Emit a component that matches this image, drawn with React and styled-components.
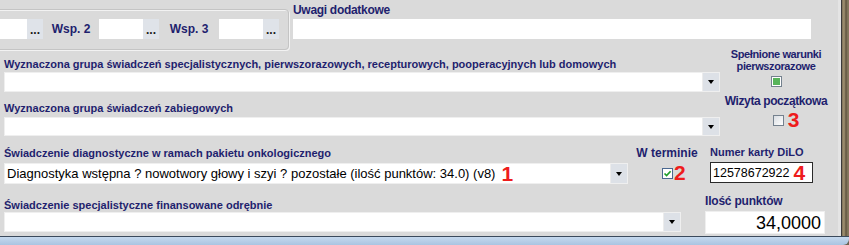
import React from "react";
import styled, { createGlobalStyle } from "styled-components";

const Global = createGlobalStyle`
  html, body {
    margin: 0;
    padding: 0;
    background: #dadada;
  }
  body {
    font-family: "Liberation Sans", Arial, sans-serif;
  }
`;

function Select({ width, height, value, mark }) {
  return (
    <SelectBox width={width} height={height}>
      <SelectText>
        {value}
        {mark && <RedMark>{mark}</RedMark>}
      </SelectText>
      <DropButton>
        <Arrow />
      </DropButton>
    </SelectBox>
  );
}

function Checkbox({ kind }) {
  return (
    <Check kind={kind}>
      {kind === "filled" && <GreenSquare />}
      {kind === "checked" && (
        <svg width="9" height="9" viewBox="0 0 9 9">
          <path d="M1.5 4.5 L3.6 6.6 L7.6 2.2" stroke="#1e9e2a" strokeWidth="1.7" fill="none" />
        </svg>
      )}
    </Check>
  );
}

export default function App() {
  return (
    <>
      <Global />
      <Window>
        <Body>
          <Content>
            <TopSection>
              <GroupBox>
                <TextBox width={58} />
                <DotsButton>...</DotsButton>
                <WspLabel w={56}>Wsp. 2</WspLabel>
                <TextBox width={44} />
                <DotsButton>...</DotsButton>
                <WspLabel w={60}>Wsp. 3</WspLabel>
                <TextBox width={44} />
                <DotsButton>...</DotsButton>
              </GroupBox>
              <Uwagi>
                <UwagiLabel>Uwagi dodatkowe</UwagiLabel>
                <TextBox width={518} />
              </Uwagi>
            </TopSection>

            <Row h={45}>
              <Field width={716} top={8}>
                <Label>
                  Wyznaczona grupa świadczeń specjalistycznych, pierwszorazowych, recepturowych,
                  pooperacyjnych lub domowych
                </Label>
                <Select height={20} />
              </Field>
              <Side>
                <SideLabel top={-2}>
                  Spełnione warunki
                  <br />
                  pierwszorazowe
                </SideLabel>
                <CheckRow top={2}>
                  <Checkbox kind="filled" />
                </CheckRow>
              </Side>
            </Row>

            <Row h={45}>
              <Field width={716} top={7} gap={2}>
                <Label>Wyznaczona grupa świadczeń zabiegowych</Label>
                <Select height={19} />
              </Field>
              <Side>
                <SideLabel top={-1} big>
                  Wizyta początkowa
                </SideLabel>
                <CheckRow top={5} shift={20}>
                  <Checkbox kind="empty" />
                  <RedMark>3</RedMark>
                </CheckRow>
              </Side>
            </Row>

            <Row h={50}>
              <Field width={624} top={7} gap={3}>
                <Label>Świadczenie diagnostyczne w ramach pakietu onkologicznego</Label>
                <Select
                  height={21}
                  value="Diagnostyka wstępna ? nowotwory głowy i szyi ? pozostałe (ilość punktów: 34.0) (v8)"
                  mark="1"
                />
              </Field>
              <TermCol>
                <SideLabel big spaced>W terminie</SideLabel>
                <CheckRow top={6} left={25} tight>
                  <Checkbox kind="checked" />
                  <RedMark>2</RedMark>
                </CheckRow>
              </TermCol>
              <DiloCol>
                <Label>Numer karty DiLO</Label>
                <DiloInput>
                  12578672922
                  <RedMark>4</RedMark>
                </DiloInput>
              </DiloCol>
            </Row>

            <Row h={46}>
              <Field width={677} top={9} gap={0}>
                <Label>Świadczenie specjalistyczne finansowane odrębnie</Label>
                <Select height={20} />
              </Field>
              <PointsCol>
                <PointsLabel>Ilość punktów</PointsLabel>
                <PointsInput>34,0000</PointsInput>
              </PointsCol>
            </Row>
          </Content>
          <RightFrame />
        </Body>
        <BottomFrame />
      </Window>
    </>
  );
}

const Window = styled.div`
  width: 849px;
  height: 245px;
  overflow: hidden;
  display: flex;
  flex-direction: column;
  background: #6e6452;
`;

const Body = styled.div`
  display: flex;
  height: 236px;
`;

const Content = styled.div`
  width: 838px;
  background: #dadada;
  border-right: 3px solid #e4e4e4;
  overflow: hidden;
  display: flex;
  flex-direction: column;
`;

const RightFrame = styled.div`
  flex: 1;
  border-left: 1px solid #3a3a3a;
  background: repeating-linear-gradient(
      90deg,
      #7d7058 0px,
      #a39474 2px,
      #5f543f 4px,
      #8c7f64 6px
    ),
    #7d7058;
`;

const BottomFrame = styled.div`
  height: 8px;
  border-top: 1px solid #3b4a5c;
  background: linear-gradient(#c6d9ee, #a9c4e2);
  border-bottom-right-radius: 6px;
`;

const TopSection = styled.div`
  display: flex;
  align-items: flex-start;
  height: 50px;
  flex-shrink: 0;
`;

const GroupBox = styled.div`
  margin-left: -40px;
  margin-top: 9px;
  height: 30px;
  padding: 9px 9px 0 8px;
  border: 1px solid #c4c4c4;
  border-radius: 4px;
  box-shadow: 1px 1px 0 #f2f2f2, inset 1px 1px 0 #f2f2f2;
  display: flex;
  align-items: flex-start;
`;

const TextBox = styled.div`
  width: ${(p) => p.width}px;
  height: 20px;
  background: #fff;
  box-sizing: border-box;
  flex-shrink: 0;
`;

const DotsButton = styled.div`
  width: 16px;
  height: 20px;
  background: #dfe3e9;
  color: #1a1a1a;
  font: bold 12px "Liberation Sans", Arial, sans-serif;
  line-height: 22px;
  text-align: center;
  flex-shrink: 0;
`;

const WspLabel = styled.div`
  width: ${(p) => p.w}px;
  text-align: center;
  color: #1f1f6e;
  font: bold 12px "Liberation Sans", Arial, sans-serif;
  line-height: 20px;
  flex-shrink: 0;
`;

const Uwagi = styled.div`
  margin-left: 4px;
  display: flex;
  flex-direction: column;
`;

const UwagiLabel = styled.div`
  color: #1f1f6e;
  font: bold 12px "Liberation Sans", Arial, sans-serif;
  letter-spacing: -0.3px;
  line-height: 15px;
  padding-top: 3px;
  margin-bottom: 1px;
`;

const Row = styled.div`
  display: flex;
  align-items: flex-start;
  height: ${(p) => p.h}px;
  flex-shrink: 0;
`;

const Field = styled.div`
  width: ${(p) => p.width}px;
  margin-left: 4px;
  padding-top: ${(p) => p.top}px;
  display: flex;
  flex-direction: column;
  gap: ${(p) => (p.gap === undefined ? 1 : p.gap)}px;
  flex-shrink: 0;
`;

const Label = styled.div`
  color: #1f1f6e;
  font: bold 11px "Liberation Sans", Arial, sans-serif;
  letter-spacing: 0;
  line-height: 13px;
  white-space: nowrap;
`;

const SelectBox = styled.div`
  height: ${(p) => p.height}px;
  box-sizing: border-box;
  border: 1px solid #efefef;
  background: #fff;
  display: flex;
`;

const SelectText = styled.div`
  flex: 1;
  display: flex;
  align-items: center;
  padding-left: 2px;
  border-right: 1px solid #ececec;
  color: #000;
  font: 13px "Liberation Sans", Arial, sans-serif;
  white-space: nowrap;
`;

const DropButton = styled.div`
  width: 16px;
  background: #dde1e7;
  display: flex;
  align-items: center;
  justify-content: center;
`;

const Arrow = styled.div`
  width: 0;
  height: 0;
  border-left: 3.5px solid transparent;
  border-right: 3.5px solid transparent;
  border-top: 4px solid #000;
`;

const RedMark = styled.span`
  color: #ee1c1c;
  font: bold 21px "Liberation Sans", Arial, sans-serif;
  line-height: 18px;
  margin-left: 6px;
`;

const Side = styled.div`
  width: 112px;
  display: flex;
  flex-direction: column;
  align-items: center;
  flex-shrink: 0;
`;

const SideLabel = styled.div`
  margin-top: ${(p) => p.top || 0}px;
  color: #1f1f6e;
  font: bold ${(p) => (p.big ? 12 : 11)}px "Liberation Sans", Arial, sans-serif;
  letter-spacing: ${(p) => (p.spaced ? 0 : -0.4)}px;
  line-height: ${(p) => (p.big ? 14 : 12)}px;
  text-align: center;
  white-space: nowrap;
`;

const CheckRow = styled.div`
  margin-top: ${(p) => p.top}px;
  margin-left: ${(p) => p.shift || 0}px;
  padding-left: ${(p) => p.left || 0}px;
  align-self: ${(p) => (p.left ? "stretch" : "center")};
  display: flex;
  align-items: center;
  height: 14px;

  ${RedMark} {
    margin-left: ${(p) => (p.tight ? 1 : 4)}px;
  }
`;

const Check = styled.div`
  width: 11px;
  height: 11px;
  box-sizing: border-box;
  border: 1px solid ${(p) => (p.kind === "checked" ? "#4a6890" : "#74818e")};
  background: ${(p) =>
    p.kind === "empty" ? "linear-gradient(135deg, #d9dde2, #ffffff)" : "#fff"};
  display: flex;
  align-items: center;
  justify-content: center;
`;

const GreenSquare = styled.div`
  width: 7px;
  height: 7px;
  background: #58b45a;
`;

const TermCol = styled.div`
  width: 60px;
  margin-left: 9px;
  padding-top: 6px;
  display: flex;
  flex-direction: column;
  align-items: center;
  flex-shrink: 0;
`;

const DiloCol = styled.div`
  width: 103px;
  margin-left: 13px;
  padding-top: 6px;
  display: flex;
  flex-direction: column;
  gap: 3px;
  flex-shrink: 0;
`;

const DiloInput = styled.div`
  height: 21px;
  box-sizing: border-box;
  border: 1px solid #2a2a2a;
  background: #fff;
  padding-left: 2px;
  display: flex;
  align-items: center;
  color: #000;
  font: 12.5px "Liberation Sans", Arial, sans-serif;

  ${RedMark} {
    margin-left: 4px;
  }
`;

const PointsCol = styled.div`
  width: 120px;
  margin-left: 24px;
  padding-top: 1px;
  display: flex;
  flex-direction: column;
  gap: 2px;
  flex-shrink: 0;
`;

const PointsLabel = styled.div`
  color: #1f1f6e;
  font: bold 12px "Liberation Sans", Arial, sans-serif;
  letter-spacing: -0.2px;
  line-height: 16px;
  padding-top: 2px;
`;

const PointsInput = styled.div`
  height: 23px;
  box-sizing: border-box;
  border: 1px solid #efefef;
  background: #fff;
  padding-right: 3px;
  text-align: right;
  color: #000;
  font: 18px "Liberation Sans", Arial, sans-serif;
  line-height: 22px;
`;
